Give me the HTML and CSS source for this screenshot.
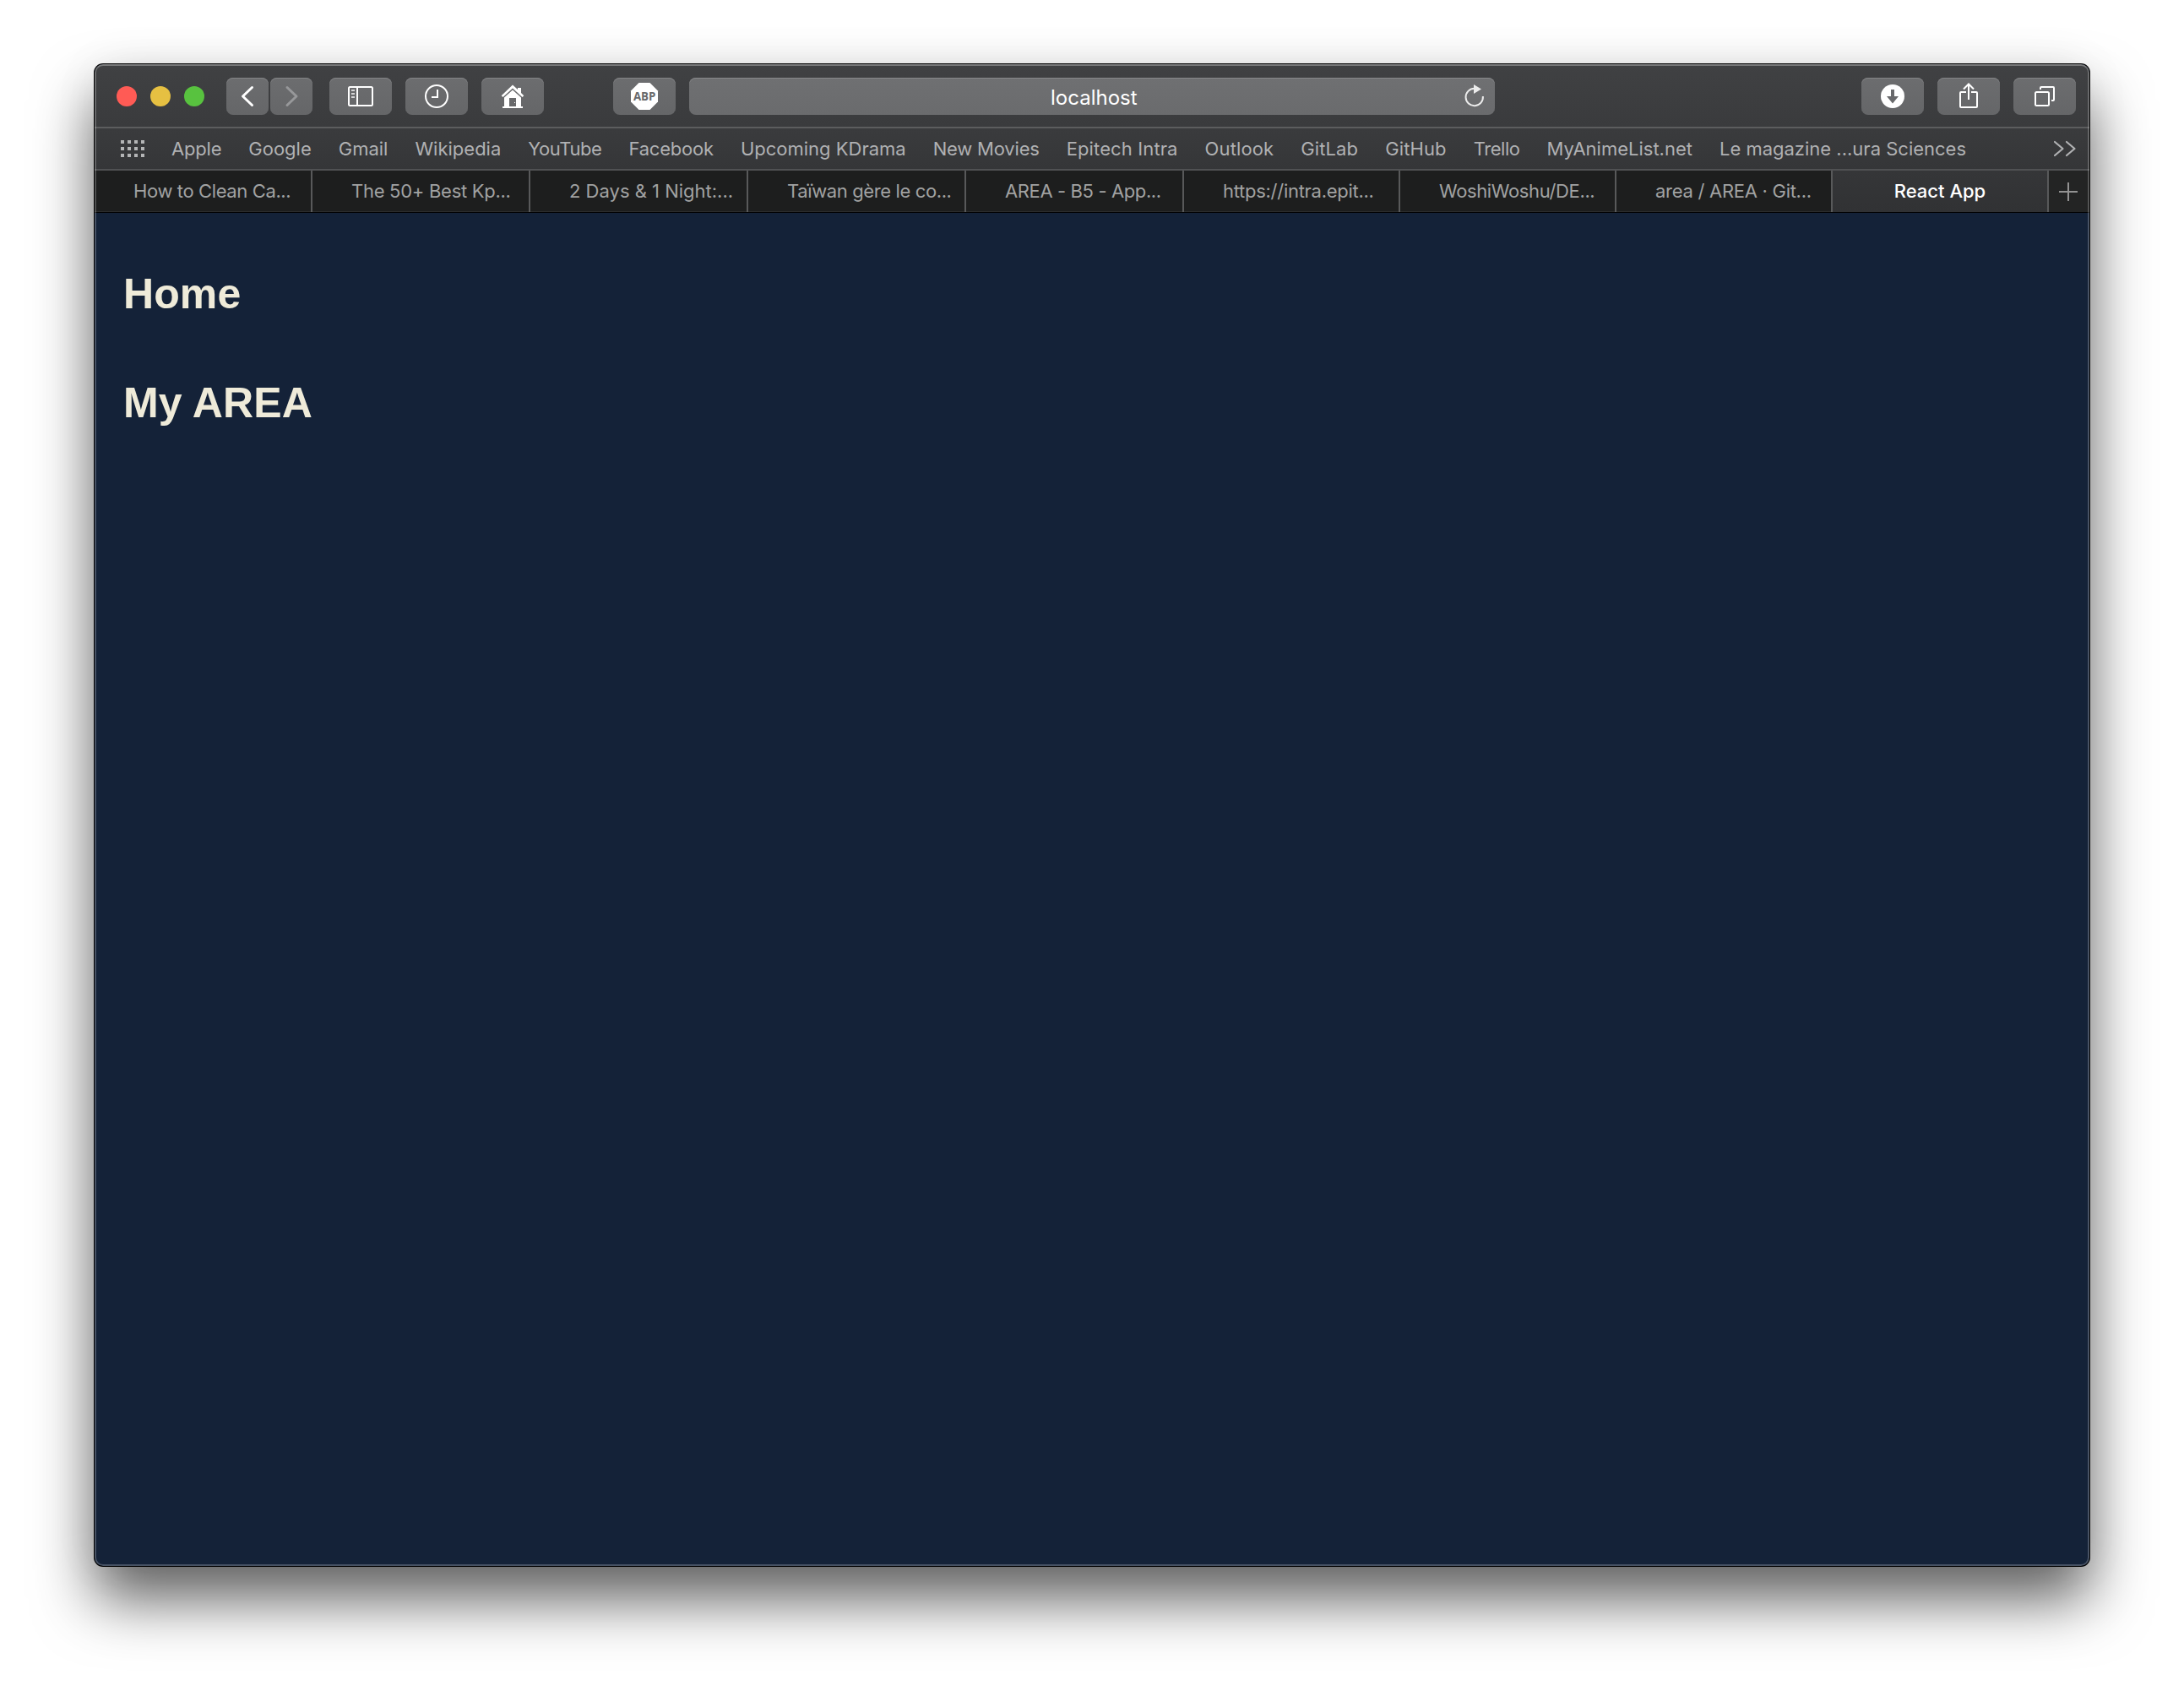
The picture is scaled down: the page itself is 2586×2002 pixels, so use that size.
FILE: index.html
```html
<!DOCTYPE html>
<html lang="en">
<head>
<meta charset="utf-8">
<title>React App</title>
<link rel="stylesheet" href="styles.css">
</head>
<body>
<div class="window">
  <header class="toolbar">
    <div class="lights"><span class="light close"></span><span class="light minimize"></span><span class="light expand"></span></div>
    <div class="nav-group">
      <button class="btn btn-nav"><svg width="50" height="44" viewBox="0 0 50 44"><path d="M30.500 11.500L19.500 22L30.500 32.500" fill="none" stroke="#fff" stroke-width="3" stroke-linecap="round" stroke-linejoin="round"/></svg></button>
      <button class="btn btn-nav"><svg width="50" height="44" viewBox="0 0 50 44"><path d="M20 11.500L31 22L20 32.500" fill="none" stroke="#97989a" stroke-width="3" stroke-linecap="round" stroke-linejoin="round"/></svg></button>
    </div>
    <div class="tool-group">
      <button class="btn"><svg width="74" height="44" viewBox="0 0 74 44"><g fill="none" stroke="#fff" stroke-width="2"><rect x="23" y="11" width="28" height="22" rx="1.500"/><path d="M33 11V33"/><path stroke="#d4d4d5" d="M26 15H30M26 19H30M26 23H30"/></g></svg></button>
      <button class="btn"><svg width="74" height="44" viewBox="0 0 74 44"><g fill="none" stroke="#fff" stroke-width="2"><circle cx="37" cy="22" r="13"/><path d="M38 14V23H31"/></g></svg></button>
      <button class="btn"><svg width="74" height="44" viewBox="0 0 74 44"><path fill="#fff" d="M37 8.500L43 14V12H47V18L50.300 21.300L48.500 23L37 12.500L25.500 23L23.700 21.300Z"/><path fill="#fff" fill-rule="evenodd" d="M37 14.500L47 23.500V34H49V36H25V34H27V23.500ZM33 24V34H41V24Z"/><rect x="39" y="29" width="1" height="1" fill="#fff"/></svg></button>
    </div>
    <button class="btn btn-abp"><svg width="74" height="44" viewBox="0 0 74 44"><path fill="#fff" d="M30.500 6H43.500L53 15.500V28.500L43.500 38H30.500L21 28.500V15.500Z"/><text class="abp-label" x="37.200" y="27" text-anchor="middle" textLength="26.500" lengthAdjust="spacingAndGlyphs">ABP</text></svg></button>
    <div class="address"><span class="address-text">localhost</span>
      <svg class="reload" width="30" height="44" viewBox="0 0 30 44"><path d="M24.900 22A10.200 10.200 0 1 1 14.800 12.800" fill="none" stroke="#ececec" stroke-width="2"/><path d="M14 8L23 13.500L14 19Z" fill="#ececec"/></svg>
    </div>
    <div class="tool-group right-tools">
      <button class="btn"><svg width="74" height="44" viewBox="0 0 74 44"><circle cx="37" cy="22" r="14" fill="#fff"/><path d="M35 14H39V22H44L37 30.500L30 22H35Z" fill="#68696b"/></svg></button>
      <button class="btn"><svg width="74" height="44" viewBox="0 0 74 44"><g fill="none" stroke="#fff" stroke-width="2"><path d="M34 17H28Q27 17 27 18V34Q27 35 28 35H46Q47 35 47 34V18Q47 17 46 17H40M37 26V8M31 13.500L37 7.500L43 13.500"/></g></svg></button>
      <button class="btn"><svg width="74" height="44" viewBox="0 0 74 44"><g fill="none" stroke="#fff" stroke-width="2"><rect x="26" y="17" width="16" height="16" rx="1.500"/><path d="M32 14V12Q32 11 33 11H47Q48 11 48 12V26Q48 27 47 27H45"/></g></svg></button>
    </div>
  </header>
  <nav class="favorites">
    <svg class="grid-icon" width="28" height="20" viewBox="0 0 28 20"><path d="M0 2H28M0 10H28M0 18H28" stroke="#b4b5b6" stroke-width="4" stroke-dasharray="4 4"/></svg>
    <div class="links">
      <a class="snug">Apple</a><a>Google</a><a>Gmail</a><a>Wikipedia</a><a class="tight">YouTube</a><a class="snug">Facebook</a><a>Upcoming KDrama</a><a class="snug">New Movies</a><a class="loose">Epitech Intra</a><a class="loose">Outlook</a><a class="loose">GitLab</a><a class="loose">GitHub</a><a class="tight">Trello</a><a>MyAnimeList.net</a><a>Le magazine ...ura Sciences</a>
    </div>
    <svg class="more" width="28" height="20" viewBox="0 0 28 20"><path d="M2 2L11.500 10L2 18M16 2L25.500 10L16 18" fill="none" stroke="#b0b1b3" stroke-width="2.200" stroke-linecap="round" stroke-linejoin="round"/></svg>
  </nav>
  <div class="tabs">
    <div class="tab wide"><span class="tight">How to Clean Ca...</span></div>
    <div class="tab wide"><span class="snug">The 50+ Best Kp...</span></div>
    <div class="tab wide"><span>2 Days &amp; 1 Night:...</span></div>
    <div class="tab wide"><span class="tight">Taïwan gère le co...</span></div>
    <div class="tab wide"><span class="tight">AREA - B5 - App...</span></div>
    <div class="tab"><span class="snug">https://intra.epit...</span></div>
    <div class="tab"><span class="tight">WoshiWoshu/DE...</span></div>
    <div class="tab"><span class="snug">area / AREA · Git...</span></div>
    <div class="tab active"><span>React App</span></div>
    <div class="new-tab"><svg width="22" height="22" viewBox="0 0 22 22"><path d="M11 0V22M0 11H22" stroke="#929292" stroke-width="2"/></svg></div>
  </div>
  <main class="page">
    <h2>Home</h2>
    <h2>My AREA</h2>
  </main>
</div>
</body>
</html>
```
FILE: styles.css
```css
* { box-sizing: border-box; }
body {
  margin: 0;
  height: 2002px;
  padding: 76px 112px 148px;
  background: #fff;
  font-family: Inter, "Liberation Sans", sans-serif;
  overflow: hidden;
}
svg { display: block; }
.window {
  position: relative;
  display: flex;
  flex-direction: column;
  height: 1778px;
  border-radius: 10px;
  overflow: hidden;
  background: #142238;
  box-shadow: 0 0 0 1px #000, 0 40px 70px rgba(0, 0, 0, .62), 0 0 60px rgba(0, 0, 0, .05);
}
.window::after {
  content: "";
  position: absolute;
  inset: 0;
  border: 2px solid rgba(255, 255, 255, .22);
  border-top-color: rgba(255, 255, 255, .3);
  border-radius: 10px;
  pointer-events: none;
}
.toolbar {
  display: flex;
  height: 76px;
  padding: 16px 16px 0 26px;
  border-bottom: 2px solid #5c5d5e;
  background: linear-gradient(#404143, #3a3b3d);
}
.lights { display: flex; gap: 16px; padding-top: 10px; margin-right: 26px; }
.light { width: 24px; height: 24px; border-radius: 50%; }
.close { background: #ff5b55; }
.minimize { background: #e6c042; }
.expand { background: #58c23f; }
.btn {
  width: 74px;
  height: 44px;
  padding: 0;
  border: 0;
  border-radius: 8px;
  background: linear-gradient(#6c6d6f, #656668);
  box-shadow: inset 0 1px 0 #838486;
}
.btn-nav { width: 50px; }
.nav-group { display: flex; gap: 2px; margin-right: 20px; }
.tool-group { display: flex; gap: 16px; }
.btn-abp { margin: 0 16px 0 82px; }
.abp-label { font: 700 15px "Open Sans", sans-serif; fill: #68696b; }
.address {
  display: flex;
  align-items: center;
  width: 954px;
  height: 44px;
  border-radius: 8px;
  background: linear-gradient(#6f7072, #6a6b6d);
  box-shadow: inset 0 1px 0 #87888a;
}
.address-text { margin-left: 428px; padding-top: 3px; font-size: 24px; line-height: 30px; color: #fff; }
.reload { margin: 0 9px 0 auto; }
.right-tools { margin-left: auto; }
.favorites {
  display: flex;
  align-items: center;
  height: 50px;
  padding: 0 15px 0 31px;
  border-bottom: 2px solid #505153;
  background: linear-gradient(#3a3b3d, #353638);
}
.links {
  display: flex;
  gap: 32px;
  margin-left: 32px;
  font-size: 22px;
  line-height: 28px;
  color: #b0b1b3;
  white-space: nowrap;
}
.loose { letter-spacing: .12px; }
.snug { letter-spacing: -.2px; }
.tight { letter-spacing: -.45px; }
.tab .snug { letter-spacing: -.28px; }
.tab .tight { letter-spacing: -.38px; }
.more { margin-left: auto; }
.tabs {
  display: flex;
  height: 50px;
  border-bottom: 1px solid #000;
  box-shadow: inset 0 -1px 0 #2b2c2c;
  background: #1d1e1e;
}
.tab {
  display: flex;
  align-items: center;
  width: 256px;
  padding: 0 0 2px 46px;
  border-right: 2px solid #58595a;
  font-size: 22px;
  line-height: 28px;
  color: #a1a2a2;
  white-space: nowrap;
}
.wide { width: 258px; }
.active { justify-content: center; padding-left: 0; background: linear-gradient(#353638, #313234); color: #fff; font-weight: 500; }
.new-tab { display: flex; align-items: center; justify-content: center; width: 48px; padding: 1px 2px 0 0; background: #232424; }
.page { flex: 1; padding: 67px 34px; color: #efebd9; }
h2 { margin: 0 0 71px; font: 700 50px/58px "Liberation Sans", Arial, sans-serif; letter-spacing: .1px; }
```
